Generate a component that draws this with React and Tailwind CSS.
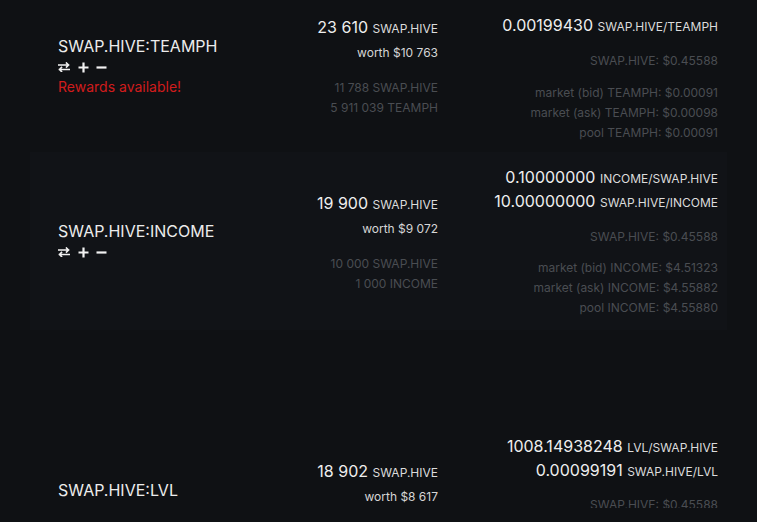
import React from 'react';

// Pool rows: pair name, user's share, and the price breakdown on the right
const SwapIcon = () => (
  <svg width="12" height="10" viewBox="0 0 12 10" fill="none" stroke="currentColor" strokeWidth="1.6" strokeLinecap="square">
    <path d="M0.5 3h10M8.5 1l2 2-2 2" />
    <path d="M11.5 7.5h-10M3.5 5.5l-2 2 2 2" />
  </svg>
);

const PlusIcon = () => (
  <svg width="11" height="11" viewBox="0 0 11 11" fill="none" stroke="currentColor" strokeWidth="2.2">
    <path d="M5.5 0.5v10M0.5 5.5h10" />
  </svg>
);

const MinusIcon = () => (
  <svg width="11" height="11" viewBox="0 0 11 11" fill="none" stroke="currentColor" strokeWidth="2.2">
    <path d="M0.5 5.5h10" />
  </svg>
);

const Actions = () => (
  <div className="flex items-center h-[18px] text-[#f2f2f2]">
    <SwapIcon />
    <span className="ml-[8px]"><PlusIcon /></span>
    <span className="ml-[7px]"><MinusIcon /></span>
  </div>
);

const Big = ({ value, unit }) => (
  <div className="h-6 leading-6 whitespace-nowrap">
    <span className="text-[16px] text-[#eeeeee]">{value}</span>{' '}
    <span className="text-[12px] text-[#dcdcdc]">{unit}</span>
  </div>
);

const Muted = ({ children }) => (
  <div className="h-5 leading-5 text-[12px] text-[#4a4d52] whitespace-nowrap">{children}</div>
);

const rows = [
  {
    name: 'SWAP.HIVE:TEAMPH',
    actions: true,
    rewards: true,
    pads: ['pt-[34px]', 'pt-[15px]', 'pt-[13px]'],
    rowClass: 'h-[150px]',
    amount: '23 610',
    worth: '$10 763',
    reserves: ['11 788 SWAP.HIVE', '5 911 039 TEAMPH'],
    prices: [['0.00199430', 'SWAP.HIVE/TEAMPH']],
    token: 'TEAMPH',
    markets: ['$0.00091', '$0.00098', '$0.00091'],
    gap: ['mt-[14px]', 'mt-[12px]'],
  },
  {
    name: 'SWAP.HIVE:INCOME',
    actions: true,
    pads: ['pt-[67px]', 'pt-[39px]', 'pt-[13px]'],
    rowClass: 'h-[178px] bg-[#111317]',
    amount: '19 900',
    worth: '$9 072',
    reserves: ['10 000 SWAP.HIVE', '1 000 INCOME'],
    prices: [
      ['0.10000000', 'INCOME/SWAP.HIVE'],
      ['10.00000000', 'SWAP.HIVE/INCOME'],
    ],
    token: 'INCOME',
    markets: ['$4.51323', '$4.55882', '$4.55880'],
    gap: ['mt-[14px]', 'mt-[11px]'],
  },
  {
    name: 'SWAP.HIVE:LVL',
    pads: ['pt-[146px]', 'pt-[127px]', 'pt-[102px]'],
    rowClass: 'h-[300px]',
    amount: '18 902',
    worth: '$8 617',
    reserves: ['9 451 SWAP.HIVE', '9 530 000 LVL'],
    prices: [
      ['1008.14938248', 'LVL/SWAP.HIVE'],
      ['0.00099191', 'SWAP.HIVE/LVL'],
    ],
    token: 'LVL',
    markets: ['$0.00045', '$0.00046', '$0.00045'],
    gap: ['mt-[13px]', 'mt-[11px]'],
  },
];

const PoolRow = ({ row }) => (
  <div className={`shrink-0 mx-[30px] pl-[28px] pr-[9px] grid grid-cols-[1fr_200px_280px] ${row.rowClass}`}>
    <div className={row.pads[0]}>
      <div className="h-6 leading-6 text-[16px] text-[#ececec]">{row.name}</div>
      {row.actions && <Actions />}
      {row.rewards && (
        <div className="mt-[1px] h-5 leading-5 text-[14px] text-[#d01c1c]">Rewards available!</div>
      )}
    </div>

    <div className={`${row.pads[1]} flex flex-col items-end`}>
      <Big value={row.amount} unit="SWAP.HIVE" />
      <div className="mt-[4px] h-5 leading-5 text-[12px] text-[#d6d6d6]">worth {row.worth}</div>
      <div className="mt-[15px] flex flex-col items-end">
        {row.reserves.map(r => <Muted key={r}>{r}</Muted>)}
      </div>
    </div>

    <div className={`${row.pads[2]} flex flex-col items-end`}>
      {row.prices.map(([v, u]) => <Big key={u} value={v} unit={u} />)}
      <div className={row.gap[0]}>
        <Muted>SWAP.HIVE: $0.45588</Muted>
      </div>
      <div className={`${row.gap[1]} flex flex-col items-end`}>
        <Muted>market (bid) {row.token}: {row.markets[0]}</Muted>
        <Muted>market (ask) {row.token}: {row.markets[1]}</Muted>
        <Muted>pool {row.token}: {row.markets[2]}</Muted>
      </div>
    </div>
  </div>
);

export default function App() {
  return (
    <div className="h-screen flex flex-col bg-[#0f1114] font-['Inter','Noto_Sans',sans-serif] overflow-hidden">
      <div className="flex-1 min-h-0 overflow-hidden flex flex-col gap-[2px]">
        {rows.map(row => <PoolRow key={row.name} row={row} />)}
      </div>
      <div className="h-[14px] shrink-0 bg-[#0f1114]" />
    </div>
  );
}
